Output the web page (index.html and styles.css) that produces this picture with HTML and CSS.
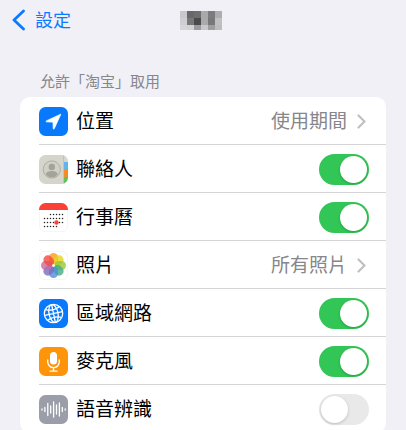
FILE: index.html
```html
<!DOCTYPE html>
<html lang="zh-Hant">
<head>
    <meta charset="UTF-8">
    <title>設定</title>
    <meta name="viewport" content="width=device-width, initial-scale=1.0">
    <link rel="stylesheet" href="styles.css">
</head>
<body>

<header class="navbar">
    <a class="back" href="#">
        <svg width="13" height="22" viewBox="0 0 13 22"><path d="M11.500 2 2 11l9.500 9" fill="none" stroke="#0a7aff" stroke-width="2.800" stroke-linecap="round" stroke-linejoin="round"/></svg>
        <span>設定</span>
    </a>
    <svg class="app-name" width="42" height="19" viewBox="0 0 42 19" shape-rendering="crispEdges">
        <path fill="#c9c9cb" d="M0 0h7v7H0z"/><path fill="#686868" d="M7 0h7v7H7z"/><path fill="#6e6e6e" d="M14 0h7v7h-7z"/><path fill="#a9a9ab" d="M21 0h7v7h-7z"/><path fill="#7c7c7e" d="M28 0h7v7h-7z"/><path fill="#adadaf" d="M35 0h7v7h-7z"/>
        <path fill="#cfcfd1" d="M0 7h7v7H0z"/><path fill="#77777a" d="M7 7h7v7H7z"/><path fill="#4a4a4c" d="M14 7h7v7h-7z"/><path fill="#aaaaad" d="M21 7h7v7h-7z"/><path fill="#78787a" d="M28 7h7v7h-7z"/><path fill="#c0c0c3" d="M35 7h7v7h-7z"/>
        <path fill="#d6d6d9" d="M0 14h7v5H0z"/><path fill="#d2d2d5" d="M7 14h7v5H7z"/><path fill="#9b9b9e" d="M14 14h7v5h-7z"/><path fill="#c8c8cb" d="M21 14h7v5h-7z"/><path fill="#9e9ea1" d="M28 14h7v5h-7z"/><path fill="#bcbcbf" d="M35 14h7v5h-7z"/>
    </svg>
</header>

<main class="content">
    <h2 class="section-title">允許「淘宝」取用</h2>

    <ul class="list">
        <li class="row">
            <svg class="icon" viewBox="0 0 29 29">
                <rect width="29" height="29" rx="6.500" fill="#0879fb"/>
                <path d="M21.800 7.200 7.300 13.900q-.8.500.1.900l6.600.3.300 6.500q.3 1 .9.100z" fill="#fff" stroke="#fff" stroke-width=".8" stroke-linejoin="round"/>
            </svg>
            <a class="body" href="#">
                <span class="label">位置</span>
                <span class="value">使用期間</span>
                <svg class="chevron" viewBox="0 0 9 15"><path d="M1.500 1.500 7.500 7.500l-6 6" fill="none" stroke="#c0c0c3" stroke-width="2.200" stroke-linecap="round" stroke-linejoin="round"/></svg>
            </a>
        </li>
        <li class="row">
            <svg class="icon" viewBox="0 0 29 29">
                <defs><clipPath id="tile"><rect width="29" height="29" rx="6.500"/></clipPath></defs>
                <g clip-path="url(#tile)">
                    <rect width="29" height="29" fill="#d5d5cc"/>
                    <rect x="25" width="4" height="8" fill="#d9d9d5"/>
                    <rect x="25" y="7" width="4" height="8" fill="#5bb5ee"/>
                    <rect x="25" y="15" width="4" height="7" fill="#f98b1d"/>
                    <rect x="25" y="22" width="4" height="7" fill="#5cc455"/>
                    <path d="M24.700 0v29" stroke="#b4b3aa" stroke-width=".7"/>
                </g>
                <circle cx="12.800" cy="14.500" r="8.600" fill="#d0d0c7" stroke="#adada4" stroke-width="1"/>
                <circle cx="12.800" cy="12" r="3.200" fill="#a3a39a"/>
                <path d="M6.800 19.400q1-3.300 6-3.300t6 3.300a7.800 7.800 0 0 1-12 0z" fill="#a3a39a"/>
            </svg>
            <div class="body">
                <label class="label" for="contacts">聯絡人</label>
                <input class="switch" type="checkbox" id="contacts" checked>
            </div>
        </li>
        <li class="row">
            <svg class="icon" viewBox="0 0 29 29">
                <rect x=".3" y=".3" width="28.400" height="28.400" rx="6.300" fill="#fff" stroke="#ededed" stroke-width=".6"/>
                <path d="M0 7V6.500A6.500 6.500 0 0 1 6.500 0h16A6.500 6.500 0 0 1 29 6.500V7z" fill="#fb4035"/>
                <g fill="none" stroke="#222" stroke-width="1.500" stroke-linecap="round">
                    <path d="M11.500 11.500h13" stroke-dasharray="0 3"/>
                    <path d="M5.500 15.500h19" stroke-dasharray="0 3"/>
                    <path d="M5.500 19.500h19" stroke-dasharray="0 3"/>
                    <path d="M5.500 23.500h13" stroke-dasharray="0 3"/>
                </g>
                <circle cx="17.500" cy="19.500" r="2.200" fill="#fb4035"/>
            </svg>
            <div class="body">
                <label class="label" for="calendar">行事曆</label>
                <input class="switch" type="checkbox" id="calendar" checked>
            </div>
        </li>
        <li class="row">
            <svg class="icon petals" viewBox="0 0 29 29">
                <rect x=".3" y=".3" width="28.400" height="28.400" rx="6.300" fill="#fff" stroke="#ededed" stroke-width=".6"/>
                <rect x="10" y="2" width="9" height="11.500" rx="4.500" fill="#fb9a1c"/>
                <rect x="10" y="2" width="9" height="11.500" rx="4.500" fill="#e6d51a" transform="rotate(45 14.500 14.500)"/>
                <rect x="10" y="2" width="9" height="11.500" rx="4.500" fill="#95c83a" transform="rotate(90 14.500 14.500)"/>
                <rect x="10" y="2" width="9" height="11.500" rx="4.500" fill="#43ad86" transform="rotate(135 14.500 14.500)"/>
                <rect x="10" y="2" width="9" height="11.500" rx="4.500" fill="#4c8fd8" transform="rotate(180 14.500 14.500)"/>
                <rect x="10" y="2" width="9" height="11.500" rx="4.500" fill="#7b6bbd" transform="rotate(225 14.500 14.500)"/>
                <rect x="10" y="2" width="9" height="11.500" rx="4.500" fill="#c56b9f" transform="rotate(270 14.500 14.500)"/>
                <rect x="10" y="2" width="9" height="11.500" rx="4.500" fill="#f24a3c" transform="rotate(315 14.500 14.500)"/>
                <circle cx="14.500" cy="14.500" r="1.300" fill="#fff"/>
            </svg>
            <a class="body" href="#">
                <span class="label">照片</span>
                <span class="value">所有照片</span>
                <svg class="chevron" viewBox="0 0 9 15"><path d="M1.500 1.500 7.500 7.500l-6 6" fill="none" stroke="#c0c0c3" stroke-width="2.200" stroke-linecap="round" stroke-linejoin="round"/></svg>
            </a>
        </li>
        <li class="row">
            <svg class="icon" viewBox="0 0 29 29">
                <rect width="29" height="29" rx="6.500" fill="#0879fb"/>
                <g fill="none" stroke="#fff" stroke-width="1.300">
                    <circle cx="14.500" cy="14.500" r="9.200"/>
                    <g transform="rotate(-12 14.500 14.500)">
                        <ellipse cx="14.500" cy="14.500" rx="4.500" ry="9"/>
                        <path d="M14.500 5.500v18M5.500 14.500h18M7.500 9q7 3.400 14 0M7.500 20q7-3.400 14 0"/>
                    </g>
                </g>
            </svg>
            <div class="body">
                <label class="label" for="network">區域網路</label>
                <input class="switch" type="checkbox" id="network" checked>
            </div>
        </li>
        <li class="row">
            <svg class="icon" viewBox="0 0 29 29">
                <rect width="29" height="29" rx="6.500" fill="#fd9409"/>
                <rect x="11" y="5" width="7" height="12.500" rx="3.500" fill="#fff"/>
                <path d="M8.700 13v1.800a5.800 5.800 0 0 0 11.600 0V13M14.500 20.600V24M11 24.100h7" fill="none" stroke="#fff" stroke-width="1.400" stroke-linecap="round"/>
            </svg>
            <div class="body">
                <label class="label" for="microphone">麥克風</label>
                <input class="switch" type="checkbox" id="microphone" checked>
            </div>
        </li>
        <li class="row">
            <svg class="icon" viewBox="0 0 29 29">
                <rect width="29" height="29" rx="6.500" fill="#9b9ea8"/>
                <path d="M3 14v1M5.900 12.500v4M8.800 8.500v12M11.700 11v7M14.600 7v15M17.500 10v9M20.400 8v13M23.300 12.500v4M26.200 14v1" fill="none" stroke="#fff" stroke-width="1.300" stroke-linecap="round"/>
            </svg>
            <div class="body">
                <label class="label" for="speech">語音辨識</label>
                <input class="switch" type="checkbox" id="speech">
            </div>
        </li>
    </ul>
</main>

</body>
</html>
```

FILE: styles.css
```css
* { box-sizing: border-box; }
body { margin: 0; background: #f1f0f6; color: #000; font-family: "Noto Sans CJK TC", sans-serif; font-size: 19px; line-height: 28px; overflow-x: hidden; scrollbar-width: none; }
a { color: inherit; text-decoration: none; }

.navbar { display: grid; grid-template-columns: 1fr auto 1fr; align-items: center; height: 40px; padding: 0 16px 0 12px; }
.back { display: flex; align-items: center; gap: 10px; color: #0a7aff; font-size: 18px; }
.back span { padding-bottom: 2px; }
.app-name { display: block; }

.content { padding: 29px 20px 20px; }
.section-title { margin: 0; padding: 0 20px 4px; color: #86868b; font-size: 15px; font-weight: 400; line-height: 24px; }

.list { margin: 0; padding: 0; list-style: none; background: #fff; border-radius: 10px; }
.row { position: relative; display: flex; align-items: center; gap: 8px; height: 48px; padding-left: 19px; }
.row + .row::before { content: ""; position: absolute; top: -1px; left: 19px; right: 0; height: 1px; background: #d5d5d8; }
.icon { width: 29px; height: 29px; flex: none; }
.petals rect + rect { opacity: 0.8; }
.body { flex: 1; display: flex; align-items: center; padding-right: 17px; }
.label, .value { padding-bottom: 2px; }
.label { flex: 1; }
.value { color: #86868b; }
.chevron { width: 9px; height: 15px; margin: 0 3px 0 10px; }

.switch { appearance: none; width: 50px; height: 31px; margin: 0; padding: 2px; border-radius: 16px; background: #e9e9ea; cursor: pointer; }
.switch::before { content: ""; display: block; width: 27px; height: 27px; border-radius: 50%; background: #fff; box-shadow: 0 1px 3px rgba(0, 0, 0, 0.2); }
.switch:checked { background: #32c657; }
.switch:checked::before { margin-left: auto; }
```
